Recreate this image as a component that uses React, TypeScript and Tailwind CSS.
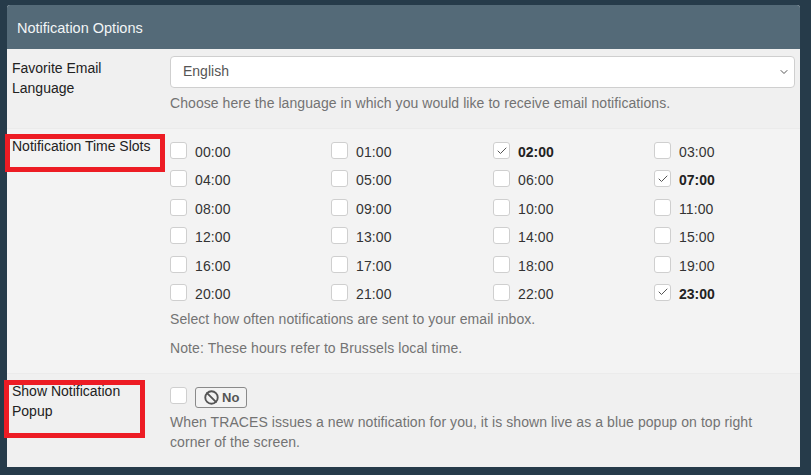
import { Ban, Check, ChevronDown } from "lucide-react";

const slots = Array.from({ length: 24 }, (_, i) => `${String(i).padStart(2, "0")}:00`);
const checked = ["02:00", "07:00", "23:00"];

function Box({ on }: { on?: boolean }) {
  return (
    <span className="flex h-[17px] w-[17px] shrink-0 items-center justify-center rounded-[3px] border border-[#cfcfcf] bg-white">
      {on && <Check size={12} strokeWidth={2} className="text-[#555]" />}
    </span>
  );
}

export default function App() {
  return (
    <div className="relative h-[475px] w-[811px] overflow-hidden bg-[#263b4a] pl-[7px] pr-[11px] pt-[5px] font-['Liberation_Sans',Arial,sans-serif] text-[14px] text-[#222]">
      <div className="overflow-hidden rounded-t-[3px] bg-[#f3f3f3]">
        {/* Header */}
        <div className="flex h-[44px] items-center bg-[#546a78] pl-[10px] pt-[3px] text-[14.5px] text-[#f2f5f6]">
          Notification Options
        </div>

        {/* Language */}
        <div className="flex h-[80px] border-b border-[#ebebeb] bg-[#f0f0f0]">
          <div className="w-[163px] shrink-0 pl-[5px] pt-[9px] leading-[20px]">
            Favorite Email
            <br />
            Language
          </div>
          <div className="flex-1 pr-[5px] pt-[7px]">
            <div className="flex h-[32px] items-center justify-between rounded-[4px] border border-[#cfcfcf] bg-white pb-[2px] pl-[12px] pr-[4px] text-[#555]">
              <span>English</span>
              <ChevronDown size={12} strokeWidth={2} className="mt-[2px] text-[#555]" />
            </div>
            <p className="mt-[5px] leading-[20px] tracking-[0.065px] text-[#737373]">
              Choose here the language in which you would like to receive email notifications.
            </p>
          </div>
        </div>

        {/* Time slots */}
        <div className="flex h-[245px] border-b border-[#ebebeb] bg-[#f3f3f3]">
          <div className="w-[163px] shrink-0 pl-[5px] pt-[7px] leading-[20px]">Notification Time Slots</div>
          <div className="flex-1 pt-[13px]">
            <div className="grid grid-cols-[161px_162px_161px_1fr] gap-y-[11.4px]">
              {slots.map((s) => {
                const on = checked.includes(s);
                return (
                  <label key={s} className="flex h-[17px] items-center gap-[8px]">
                    <Box on={on} />
                    <span className={on ? "mt-[4px] font-bold" : "mt-[4px] tracking-[0.1px] text-[#333]"}>{s}</span>
                  </label>
                );
              })}
            </div>
            <p className="mt-[8px] leading-[20px] tracking-[0.07px] text-[#737373]">
              Select how often notifications are sent to your email inbox.
            </p>
            <p className="mt-[9px] leading-[20px] tracking-[0.1px] text-[#737373]">
              Note: These hours refer to Brussels local time.
            </p>
          </div>
        </div>

        {/* Popup */}
        <div className="flex h-[93px] bg-[#f0f0f0]">
          <div className="w-[163px] shrink-0 pl-[5px] pt-[7px] leading-[20px]">
            Show Notification
            <br />
            Popup
          </div>
          <div className="flex-1 pr-[20px] pt-[13px]">
            <div className="flex items-start gap-[8px]">
              <Box />
              <span className="flex h-[21px] w-[52px] items-center gap-[3px] rounded-[3px] border border-[#8a8a8a] bg-[#f3f3f3] pl-[8px] text-[13px] font-bold text-[#555]">
                <Ban size={15} strokeWidth={3} />
                No
              </span>
            </div>
            <p className="mt-[4px] leading-[20px] tracking-[0.08px] text-[#737373]">
              When TRACES issues a new notification for you, it is shown live as a blue popup on top right corner of the screen.
            </p>
          </div>
        </div>
      </div>

      {/* Red annotation boxes */}
      <div className="absolute left-[5px] top-[134px] h-[38px] w-[160px] border-[5px] border-[#ed1c24]" />
      <div className="absolute left-[4px] top-[380px] h-[58px] w-[141px] border-[5px] border-[#ed1c24]" />
    </div>
  );
}
